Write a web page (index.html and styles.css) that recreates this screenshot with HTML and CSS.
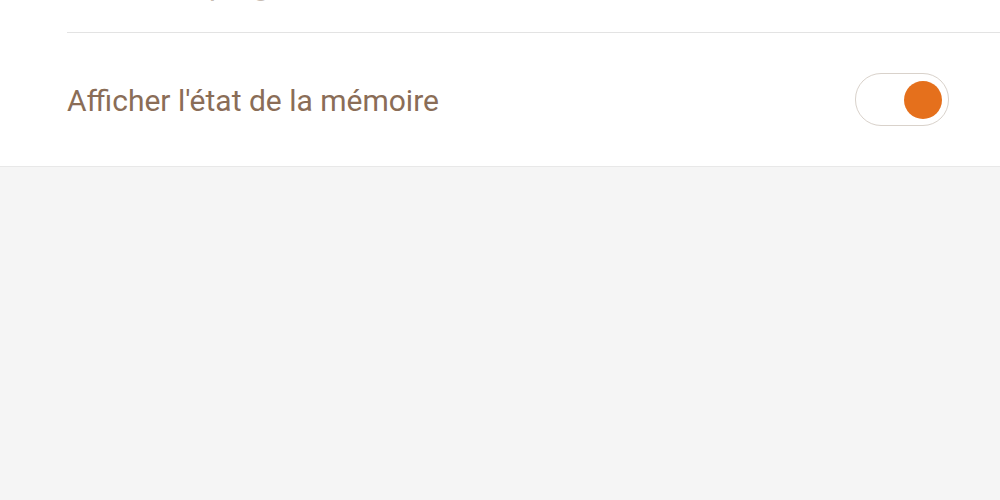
FILE: index.html
```html
<!DOCTYPE html>
<html lang="fr">

<head>
  <meta charset="UTF-8">
  <meta name="viewport" content="width=device-width, initial-scale=1.0">
  <title>Paramètres</title>
  <link rel="stylesheet" href="styles.css">
</head>

<body>

  <div class="settings">
    <div class="row row-prev">
      <span class="label">Afficher la progression du réseau</span>
    </div>
    <div class="row">
      <span class="label">Afficher l'état de la mémoire</span>
      <label class="switch on">
        <span class="knob"></span>
      </label>
    </div>
  </div>

</body>

</html>
```

FILE: styles.css
```css
html,
body {
  margin: 0;
  padding: 0;
}

body {
  font-family: Roboto, "Noto Sans", sans-serif;
  background-color: #f5f5f5;
  height: 500px;
  overflow: hidden;
}

.settings {
  background-color: #fff;
  border-bottom: 1px solid #e8e8e8;
  padding-left: 67px;
}

.row {
  display: flex;
  align-items: center;
  justify-content: space-between;
  height: 133px;
  padding-right: 51px;
}

.row-prev {
  height: 32px;
  align-items: flex-end;
  border-bottom: 1px solid #e3e3e3;
  overflow: hidden;
}

.row-prev .label {
  margin-bottom: 30px;
  color: #c8bdb3;
}

.label {
  font-size: 30px;
  line-height: 35px;
  color: #8a6d57;
  padding-top: 2px;
}

.switch {
  width: 92px;
  height: 51px;
  border: 1px solid #d9d2cb;
  border-radius: 26px;
  display: flex;
  align-items: center;
  box-sizing: content-box;
  background-color: #fff;
}

.knob {
  width: 38px;
  height: 38px;
  border-radius: 50%;
  background-color: #e5701c;
  margin-left: 48px;
}
```
